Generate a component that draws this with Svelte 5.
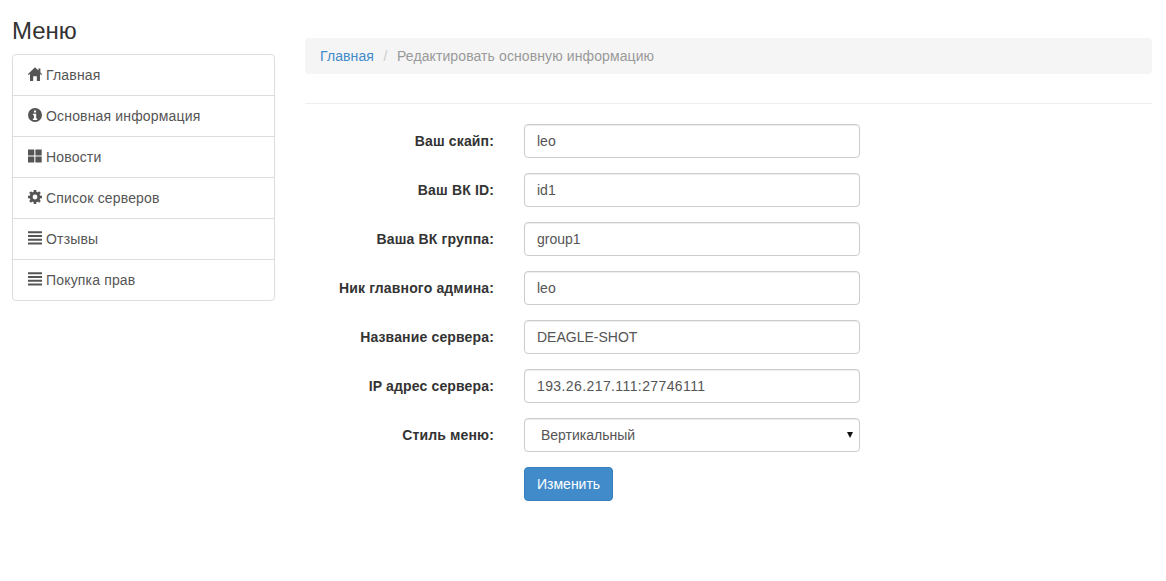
<script>
  const menu = [
    { label: "Главная", icon: "home" },
    { label: "Основная информация", icon: "info" },
    { label: "Новости", icon: "grid" },
    { label: "Список серверов", icon: "cog" },
    { label: "Отзывы", icon: "lines" },
    { label: "Покупка прав", icon: "lines" }
  ];
  const fields = [
    { label: "Ваш скайп:", value: "leo" },
    { label: "Ваш ВК ID:", value: "id1" },
    { label: "Ваша ВК группа:", value: "group1" },
    { label: "Ник главного админа:", value: "leo" },
    { label: "Название сервера:", value: "DEAGLE-SHOT" },
    { label: "IP адрес сервера:", value: "193.26.217.111:27746111", digits: true }
  ];
  const teeth = [0, 45, 90, 135, 180, 225, 270, 315];
</script>

<div class="page">
  <aside class="sidebar">
    <h3>Меню</h3>
    <div class="list">
      {#each menu as item}
        <a class="item" href="#top">
          <svg class="icon" viewBox="0 0 14 14" aria-hidden="true">
            {#if item.icon === "home"}
              <path d="M7 .2 10.4 3.5V1.6h2v3.9L14.2 7.2l-.8.9L12 6.9V14H8.8V9.2H5.2V14H2V6.9L.6 8.1-.2 7.2z" />
            {:else if item.icon === "info"}
              <path
                fill-rule="evenodd"
                d="M7 0a7 7 0 1 0 0 14A7 7 0 0 0 7 0zM5.9 2.4h2.2v2.1H5.9zM4.9 5.7h3.3v4.7h1v1.5H4.9v-1.5h1.1V7.2h-1.1z"
              />
            {:else if item.icon === "grid"}
              <path d="M0 .4h6.3v6H0zM7.4 .4h6.3v6H7.4zM0 7.6h6.3v6H0zM7.4 7.6h6.3v6H7.4z" />
            {:else if item.icon === "cog"}
              <circle class="ring" cx="7" cy="7" r="3.9" />
              {#each teeth as a}
                <rect x="5.7" y="0" width="2.6" height="3" transform="rotate({a} 7 7)" />
              {/each}
            {:else}
              <path d="M0 .3h14v2H0zM0 4h14v2H0zM0 7.7h14v2H0zM0 11.4h14v2H0z" />
            {/if}
          </svg>
          {item.label}
        </a>
      {/each}
    </div>
  </aside>

  <main class="content">
    <ol class="breadcrumb">
      <li><a href="#top">Главная</a></li>
      <li class="sep">/</li>
      <li class="active">Редактировать основную информацию</li>
    </ol>
    <hr />
    <form class="form">
      {#each fields as field}
        <label class="name" for={field.label}>{field.label}</label>
        <input class="control" class:digits={field.digits} id={field.label} type="text" value={field.value} />
      {/each}
      <label class="name" for="menu-style">Стиль меню:</label>
      <div class="select-wrap">
        <select class="control select" id="menu-style">
          <option>Вертикальный</option>
          <option>Горизонтальный</option>
        </select>
      </div>
      <button class="btn" type="button">Изменить</button>
    </form>
  </main>
</div>

<style>
  :global(body) {
    font-family: "Liberation Sans", Arial, sans-serif;
    font-size: 14px;
    line-height: 20px;
    color: #333;
    background: #fff;
  }
  .page {
    display: flex;
    gap: 30px;
    padding: 0 14px 0 12px;
    box-sizing: border-box;
  }
  .sidebar {
    width: 263px;
    flex-shrink: 0;
    padding-top: 18px;
  }
  h3 {
    margin: 0 0 10px;
    font-size: 24px;
    font-weight: 500;
    line-height: 26px;
  }
  .list {
    border: 1px solid #ddd;
    border-radius: 4px;
  }
  .item {
    display: block;
    padding: 10px 15px;
    color: #555;
    text-decoration: none;
    letter-spacing: 0.16px;
    border-top: 1px solid #ddd;
  }
  .item:first-child {
    border-top: none;
  }
  .icon {
    display: inline-block;
    width: 14px;
    height: 14px;
    vertical-align: -1px;
    fill: #555;
    overflow: visible;
  }
  .ring {
    fill: none;
    stroke: #555;
    stroke-width: 3;
  }
  .content {
    flex: 1;
    min-width: 0;
    padding-top: 38px;
  }
  .breadcrumb {
    display: flex;
    gap: 9.5px;
    margin: 0;
    padding: 8px 15px;
    list-style: none;
    letter-spacing: 0.1px;
    background: #f5f5f5;
    border-radius: 4px;
  }
  .breadcrumb a {
    color: #428bca;
    text-decoration: none;
  }
  .sep {
    color: #ccc;
  }
  .active {
    color: #999;
  }
  hr {
    margin: 29px 0 20px;
    border: 0;
    border-top: 1px solid #eee;
  }
  .form {
    display: grid;
    grid-template-columns: 189px 336px;
    column-gap: 30px;
    row-gap: 15px;
    align-items: center;
  }
  .name {
    font-weight: 700;
    text-align: right;
    letter-spacing: 0.15px;
  }
  .control {
    box-sizing: border-box;
    display: block;
    width: 100%;
    height: 34px;
    padding: 6px 12px;
    font: inherit;
    color: #555;
    background: #fff;
    border: 1px solid #ccc;
    border-radius: 4px;
    box-shadow: inset 0 1px 1px rgba(0, 0, 0, 0.075);
  }
  .digits {
    letter-spacing: 0.4px;
  }
  .select-wrap {
    position: relative;
  }
  .select {
    appearance: none;
    padding-left: 16px;
  }
  .select-wrap::after {
    content: "";
    position: absolute;
    right: 7px;
    top: 14px;
    border-left: 3px solid transparent;
    border-right: 3px solid transparent;
    border-top: 6px solid #111;
    pointer-events: none;
  }
  .btn {
    grid-column: 2;
    justify-self: start;
    height: 34px;
    padding: 6px 12px;
    font: inherit;
    color: #fff;
    background: #428bca;
    border: 1px solid #357ebd;
    border-radius: 4px;
  }
</style>
